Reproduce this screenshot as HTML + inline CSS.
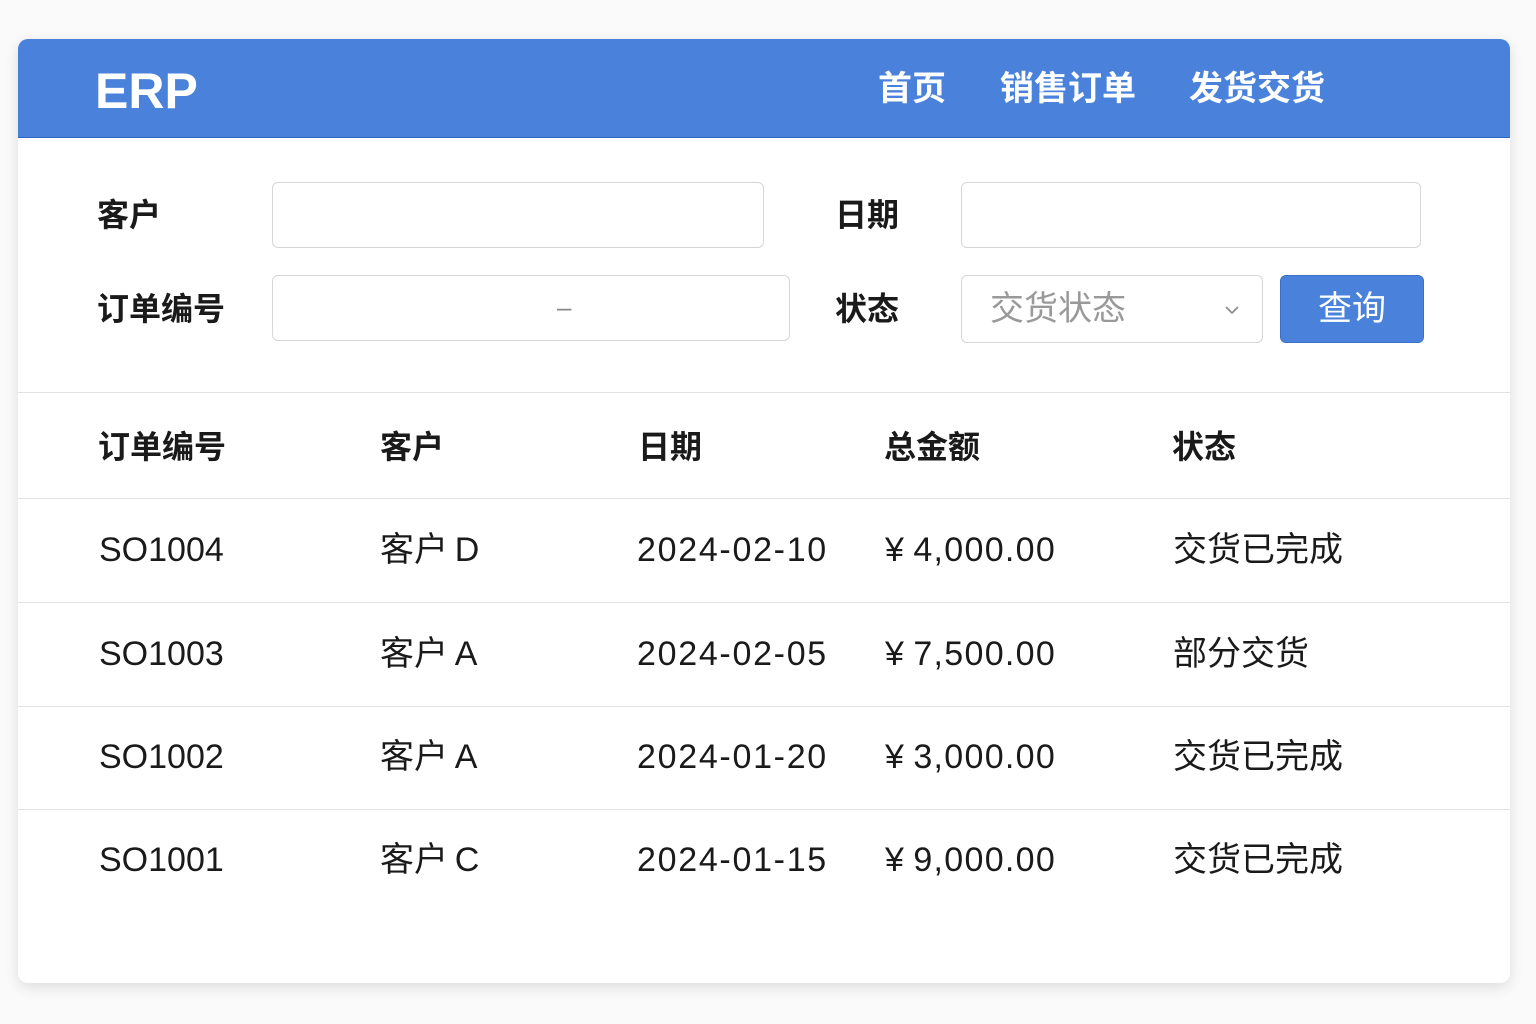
<!DOCTYPE html>
<html><head><meta charset="utf-8"><style>
body{margin:0;width:1536px;height:1024px;background:#fafafa;font-family:"Liberation Sans","Noto Sans CJK SC",sans-serif;position:relative;overflow:hidden}
.card{position:absolute;left:18px;top:39px;width:1492px;height:944px;background:#fff;border-radius:10px;box-shadow:0 4px 14px rgba(0,0,0,.12);overflow:hidden}
.hd{position:absolute;left:0;top:0;width:100%;height:98px;background:#4a82db;border-bottom:1px solid #2f66c4}
.a{position:absolute;white-space:nowrap;line-height:1}
.logo{left:77px;top:27px;font-size:50px;font-weight:bold;color:#fff}
.nav{top:33px;font-size:34px;font-weight:bold;color:#fff}
.lb{font-size:32px;font-weight:bold;color:#1a1a1a}
.in{position:absolute;border:1.5px solid #d6d6d6;border-radius:6px;background:#fff}
.btn{position:absolute;left:1262px;top:236px;width:142px;height:66px;background:#4a82db;border-radius:6px;border:1px solid #3a70c8;color:#fff;font-size:34px;text-align:center;line-height:66px}
.ln{position:absolute;left:0;width:100%;height:1px;background:#e2e2e2}
.th{font-size:32px;font-weight:bold;color:#1a1a1a}
.td{font-size:34px;color:#1a1a1a}
.dt{letter-spacing:1.7px}
.am{letter-spacing:1.3px}
</style></head><body>
<div class="card">
<div class="hd">
<div class="a logo">ERP</div>
<div class="a nav" style="left:860px">首页</div>
<div class="a nav" style="left:982px">销售订单</div>
<div class="a nav" style="left:1171px">发货交货</div>
</div>
<div class="a lb" style="left:79px;top:160px">客户</div>
<div class="in" style="left:254px;top:143px;width:490px;height:64px"></div>
<div class="a lb" style="left:817px;top:160px">日期</div>
<div class="in" style="left:943px;top:143px;width:458px;height:64px"></div>
<div class="a lb" style="left:79px;top:254px">订单编号</div>
<div class="in" style="left:254px;top:236px;width:516px;height:64px"><div class="a" style="left:284px;top:18px;color:#888;font-size:26px">–</div></div>
<div class="a lb" style="left:817px;top:254px">状态</div>
<div class="in" style="left:943px;top:236px;width:300px;height:66px"><div class="a" style="left:28px;top:16px;color:#999;font-size:34px">交货状态</div>
<svg style="position:absolute;left:262px;top:28px" width="16" height="12"><path d="M2 3l6 6 6-6" fill="none" stroke="#888" stroke-width="1.6"/></svg></div>
<div class="btn">查询</div>
<div class="ln" style="top:353px"></div>
<div class="a th" style="left:80px;top:392px">订单编号</div>
<div class="a th" style="left:362px;top:392px">客户</div>
<div class="a th" style="left:620px;top:392px">日期</div>
<div class="a th" style="left:866px;top:392px">总金额</div>
<div class="a th" style="left:1154px;top:392px">状态</div>
<div class="ln" style="top:459px"></div>
<div class="a td" style="left:81px;top:494px">SO1004</div><div class="a td" style="left:362px;top:494px">客户&#8201;D</div><div class="a td dt" style="left:619px;top:494px">2024-02-10</div><div class="a td am" style="left:867px;top:494px">¥&#8201;4,000.00</div><div class="a td" style="left:1155px;top:494px">交货已完成</div>
<div class="ln" style="top:563px"></div>
<div class="a td" style="left:81px;top:598px">SO1003</div><div class="a td" style="left:362px;top:598px">客户&#8201;A</div><div class="a td dt" style="left:619px;top:598px">2024-02-05</div><div class="a td am" style="left:867px;top:598px">¥&#8201;7,500.00</div><div class="a td" style="left:1155px;top:598px">部分交货</div>
<div class="ln" style="top:667px"></div>
<div class="a td" style="left:81px;top:701px">SO1002</div><div class="a td" style="left:362px;top:701px">客户&#8201;A</div><div class="a td dt" style="left:619px;top:701px">2024-01-20</div><div class="a td am" style="left:867px;top:701px">¥&#8201;3,000.00</div><div class="a td" style="left:1155px;top:701px">交货已完成</div>
<div class="ln" style="top:770px"></div>
<div class="a td" style="left:81px;top:804px">SO1001</div><div class="a td" style="left:362px;top:804px">客户&#8201;C</div><div class="a td dt" style="left:619px;top:804px">2024-01-15</div><div class="a td am" style="left:867px;top:804px">¥&#8201;9,000.00</div><div class="a td" style="left:1155px;top:804px">交货已完成</div>
</div>
</body></html>
